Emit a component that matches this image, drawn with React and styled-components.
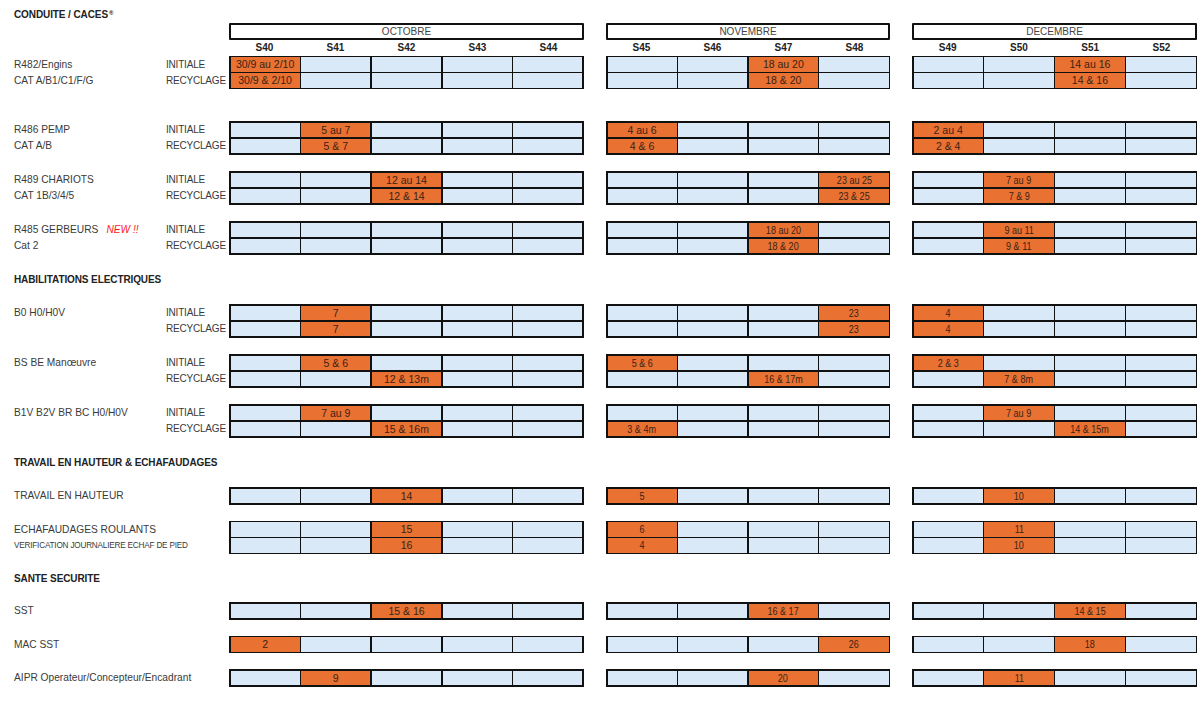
import React from 'react';
import styled, { createGlobalStyle } from 'styled-components';

const GlobalStyle = createGlobalStyle`
  body {
    margin: 0;
    background: #fff;
    font-family: 'Liberation Sans', Arial, sans-serif;
    color: #3a3a3a;
  }
`;

const MONTHS = [
  { name: 'OCTOBRE', weeks: [40, 41, 42, 43, 44], width: 355 },
  { name: 'NOVEMBRE', weeks: [45, 46, 47, 48], width: 284 },
  { name: 'DECEMBRE', weeks: [49, 50, 51, 52], width: 285 },
];

const Sheet = styled.div`
  width: 1200px;
  box-sizing: border-box;
  padding: 6px 0 0 14px;
`;

const SectionTitle = styled.div`
  height: 16.5px;
  display: flex;
  align-items: center;
  font-size: 10px;
  font-weight: bold;
  color: #222;
  letter-spacing: -0.1px;

  sup {
    font-size: 6px;
    margin-left: 1px;
    position: relative;
    top: -1px;
  }
`;

const Spacer = styled.div`
  height: ${(p) => p.$h}px;
`;

const Line = styled.div`
  display: grid;
  grid-template-columns: 152px 63px 1fr;
`;

const Months = styled.div`
  display: flex;
  gap: 22px;
`;

const MonthHead = styled.div`
  width: ${(p) => p.$w}px;
  height: 17px;
  box-sizing: border-box;
  border: 2px solid #111;
  border-radius: 1px;
  background: #fff;
  display: flex;
  align-items: center;
  justify-content: center;
  font-size: 10px;
  color: #444;
`;

const WeekRow = styled.div`
  width: ${(p) => p.$w}px;
  height: 16px;
  display: grid;
  grid-template-columns: repeat(${(p) => p.$n}, 1fr);
  align-items: center;
  text-align: center;
  font-size: 10px;
  font-weight: bold;
  color: #222;
`;

const Block = styled.div`
  width: ${(p) => p.$w}px;
  box-sizing: border-box;
  display: grid;
  grid-template-columns: repeat(${(p) => p.$n}, 1fr);
  grid-auto-rows: 14.5px;
  gap: 1.5px;
  padding: 1.5px;
  background: #111;
`;

const Cell = styled.div`
  background: ${(p) => (p.$on ? '#e97132' : '#dae9f8')};
  display: flex;
  align-items: center;
  justify-content: center;
  font-size: 10.5px;
  color: #3a2314;
  white-space: nowrap;
`;

const CellText = styled.span`
  display: inline-block;
  transform: ${(p) => (p.$narrow ? 'scaleX(0.86)' : 'none')};
`;

const LabelCol = styled.div`
  display: flex;
  flex-direction: column;
  padding: 1px 0;
`;

const Label = styled.div`
  flex: 1;
  display: flex;
  align-items: center;
  font-size: ${(p) => (p.$small ? 8.2 : 10.2)}px;
  letter-spacing: ${(p) => (p.$small ? -0.2 : 0)}px;
  white-space: nowrap;
  color: #3a3a3a;
`;

const SubLabel = styled(Label)`
  font-size: 10px;
  letter-spacing: -0.2px;
`;

const NewTag = styled.span`
  margin-left: 8px;
  color: #ff1a1a;
  font-style: italic;
`;

const Header = () => (
  <>
    <Line>
      <div />
      <div />
      <Months>
        {MONTHS.map((m) => (
          <MonthHead key={m.name} $w={m.width}>
            {m.name}
          </MonthHead>
        ))}
      </Months>
    </Line>
    <Line>
      <div />
      <div />
      <Months>
        {MONTHS.map((m) => (
          <WeekRow key={m.name} $w={m.width} $n={m.weeks.length}>
            {m.weeks.map((w) => (
              <span key={w}>S{w}</span>
            ))}
          </WeekRow>
        ))}
      </Months>
    </Line>
  </>
);

// narrow: the Nov/Dec cells of the later rows use a condensed face in the sheet
const Group = ({ labels, subs = [], rows, small, narrow }) => (
  <Line>
    <LabelCol>
      {labels.map((l, i) => (
        <Label key={i} $small={small && i === 1}>
          {l}
        </Label>
      ))}
    </LabelCol>
    <LabelCol>
      {subs.map((s, i) => (
        <SubLabel key={i}>{s}</SubLabel>
      ))}
    </LabelCol>
    <Months>
      {MONTHS.map((m, mi) => (
        <Block key={m.name} $w={m.width} $n={m.weeks.length}>
          {rows.map((r, ri) =>
            m.weeks.map((w) => (
              <Cell key={`${ri}-${w}`} $on={!!r[w]}>
                {r[w] && <CellText $narrow={narrow && mi > 0}>{r[w]}</CellText>}
              </Cell>
            ))
          )}
        </Block>
      ))}
    </Months>
  </Line>
);

const IR = ['INITIALE', 'RECYCLAGE'];

const App = () => (
  <Sheet>
    <GlobalStyle />
    <SectionTitle>
      CONDUITE / CACES<sup>®</sup>
    </SectionTitle>
    <Header />
    <Group
      labels={['R482/Engins', 'CAT A/B1/C1/F/G']}
      subs={IR}
      rows={[
        { 40: '30/9 au 2/10', 47: '18 au 20', 51: '14 au 16' },
        { 40: '30/9 & 2/10', 47: '18 & 20', 51: '14 & 16' },
      ]}
    />
    <Spacer $h={32} />
    <Group
      labels={['R486 PEMP', 'CAT A/B']}
      subs={IR}
      rows={[
        { 41: '5 au 7', 45: '4 au 6', 49: '2 au 4' },
        { 41: '5 & 7', 45: '4 & 6', 49: '2 & 4' },
      ]}
    />
    <Spacer $h={16.5} />
    <Group
      narrow
      labels={['R489 CHARIOTS', 'CAT 1B/3/4/5']}
      subs={IR}
      rows={[
        { 42: '12 au 14', 48: '23 au 25', 50: '7 au 9' },
        { 42: '12 & 14', 48: '23 & 25', 50: '7 & 9' },
      ]}
    />
    <Spacer $h={16.5} />
    <Group
      narrow
      labels={[
        <>
          R485 GERBEURS <NewTag>NEW !!</NewTag>
        </>,
        'Cat 2',
      ]}
      subs={IR}
      rows={[
        { 47: '18 au 20', 50: '9 au 11' },
        { 47: '18 & 20', 50: '9 & 11' },
      ]}
    />

    <Spacer $h={16.5} />
    <SectionTitle>HABILITATIONS ELECTRIQUES</SectionTitle>
    <Spacer $h={16.5} />
    <Group
      narrow
      labels={['B0 H0/H0V', '']}
      subs={IR}
      rows={[
        { 41: '7', 48: '23', 49: '4' },
        { 41: '7', 48: '23', 49: '4' },
      ]}
    />
    <Spacer $h={16.5} />
    <Group
      narrow
      labels={['BS BE Manœuvre', '']}
      subs={IR}
      rows={[
        { 41: '5 & 6', 45: '5 & 6', 49: '2 & 3' },
        { 42: '12 & 13m', 47: '16 & 17m', 50: '7 & 8m' },
      ]}
    />
    <Spacer $h={16.5} />
    <Group
      narrow
      labels={['B1V B2V BR BC H0/H0V', '']}
      subs={IR}
      rows={[
        { 41: '7 au 9', 50: '7 au 9' },
        { 42: '15 & 16m', 45: '3 & 4m', 51: '14 & 15m' },
      ]}
    />

    <Spacer $h={16.5} />
    <SectionTitle>TRAVAIL EN HAUTEUR &amp; ECHAFAUDAGES</SectionTitle>
    <Spacer $h={16.5} />
    <Group narrow labels={['TRAVAIL EN HAUTEUR']} rows={[{ 42: '14', 45: '5', 50: '10' }]} />
    <Spacer $h={16} />
    <Group
      narrow
      small
      labels={['ECHAFAUDAGES ROULANTS', 'VERIFICATION JOURNALIERE ECHAF DE PIED']}
      rows={[
        { 42: '15', 45: '6', 50: '11' },
        { 42: '16', 45: '4', 50: '10' },
      ]}
    />

    <Spacer $h={16} />
    <SectionTitle>SANTE SECURITE</SectionTitle>
    <Spacer $h={15.5} />
    <Group narrow labels={['SST']} rows={[{ 42: '15 & 16', 47: '16 & 17', 51: '14 & 15' }]} />
    <Spacer $h={16} />
    <Group narrow labels={['MAC SST']} rows={[{ 40: '2', 48: '26', 51: '18' }]} />
    <Spacer $h={16} />
    <Group
      narrow
      labels={['AIPR Operateur/Concepteur/Encadrant']}
      rows={[{ 41: '9', 47: '20', 50: '11' }]}
    />
  </Sheet>
);

export default App;
